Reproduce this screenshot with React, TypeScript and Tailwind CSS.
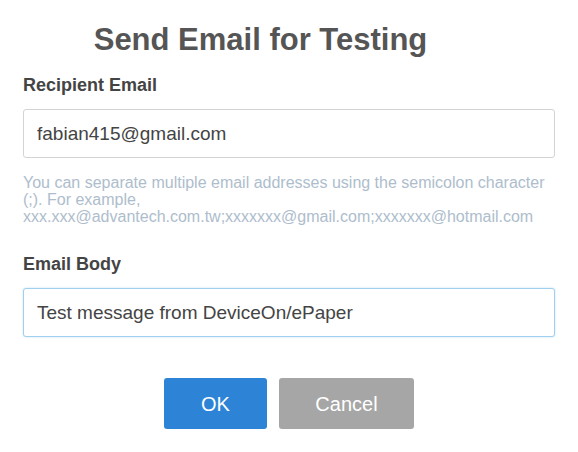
export default function App() {
  return (
    <div className="min-h-[452px] w-[578px] bg-white font-['Liberation_Sans',Arial,sans-serif]">
      <div className="px-[23px] pt-[18px]">
        <h1 className="pr-[57px] text-center text-[31px] font-bold leading-[44px] text-[#555555]">
          Send Email for Testing
        </h1>

        <label className="mt-[12px] block text-[18px] font-bold leading-[22px] text-[#444444]">
          Recipient Email
        </label>
        <input
          type="text"
          defaultValue="fabian415@gmail.com"
          className="mt-[13px] block h-[49px] w-full rounded-[3px] border border-[#d4d4d4] bg-white px-[13px] text-[19px] text-[#444444] outline-none"
        />
        <p className="mt-[16px] text-[16px] leading-[17px] text-[#aebdcc]">
          You can separate multiple email addresses using the semicolon character (;). For example,
          <br />
          xxx.xxx@advantech.com.tw;xxxxxxx@gmail.com;xxxxxxx@hotmail.com
        </p>

        <label className="mt-[28px] block text-[18px] font-bold leading-[22px] text-[#444444]">
          Email Body
        </label>
        <input
          type="text"
          defaultValue="Test message from DeviceOn/ePaper"
          className="mt-[13px] block h-[49px] w-full rounded-[3px] border border-[#9fd0f0] bg-white px-[13px] text-[19px] text-[#444444] outline-none shadow-[0_0_2px_rgba(102,175,233,0.4)]"
        />

        <div className="mt-[41px] flex justify-center gap-[12px]">
          <button className="h-[51px] w-[103px] rounded-[3px] bg-[#2d84d6] text-[20px] text-white">
            OK
          </button>
          <button className="h-[51px] w-[135px] rounded-[3px] bg-[#a6a6a6] text-[20px] text-white">
            Cancel
          </button>
        </div>
      </div>
    </div>
  );
}
